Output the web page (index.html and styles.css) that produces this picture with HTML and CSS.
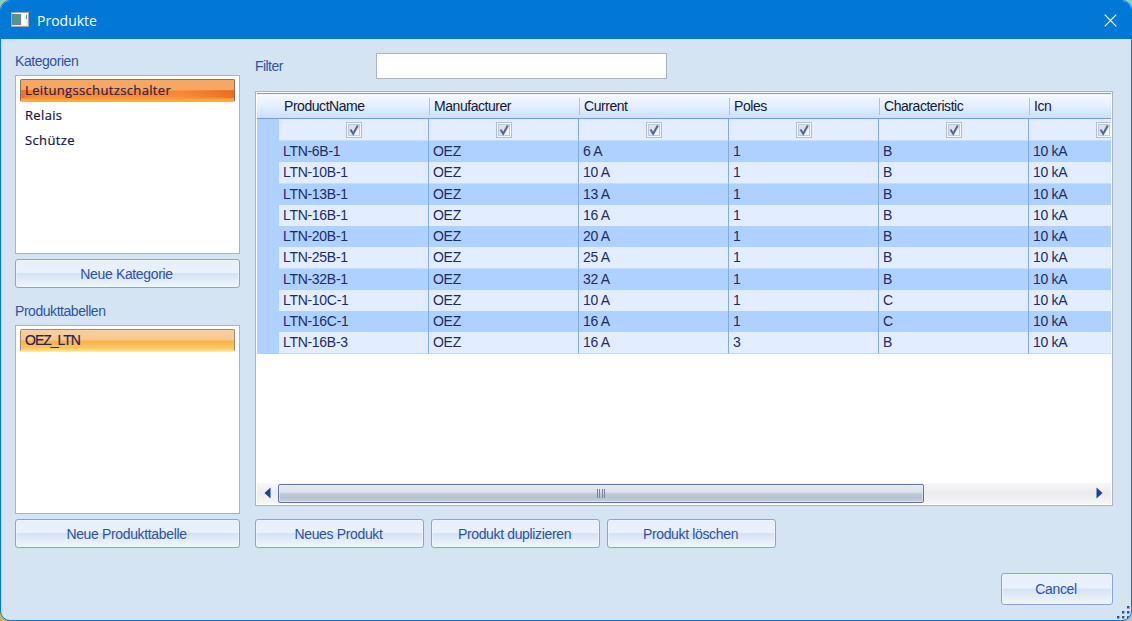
FILE: index.html
```html
<!DOCTYPE html>
<html lang="de">
<head>
    <meta charset="UTF-8">
    <title>Produkte</title>
    <link rel="stylesheet" href="styles.css">
</head>
<body>
    <div class="window">
        <div class="titlebar">
            <svg class="app-icon" width="18" height="15" viewBox="0 0 18 15">
                <rect x="0" y="0" width="18" height="15" fill="#e9eef2"/>
                <rect x="0.5" y="0.5" width="17" height="14" fill="none" stroke="#a9a5a8"/>
                <rect x="1" y="1" width="16" height="1" fill="#fff"/>
                <rect x="1.5" y="2.5" width="8" height="10" fill="#4b9b8a" stroke="#6d84a0"/>
                <rect x="11" y="2" width="4" height="11" fill="#fff"/>
                <rect x="15" y="3" width="1" height="4" fill="#5e87a8"/>
            </svg>
            <span class="title">Produkte</span>
            <svg class="close" width="13" height="13" viewBox="0 0 13 13">
                <path d="M0.7 0.7L12.3 12.3M12.3 0.7L0.7 12.3" stroke="#fff" stroke-width="1.2"/>
            </svg>
        </div>

        <div class="content">
            <div class="sidebar">
                <label class="caption">Kategorien</label>
                <div class="listbox categories">
                    <div class="item active">Leitungsschutzschalter</div>
                    <div class="item">Relais</div>
                    <div class="item">Schütze</div>
                </div>
                <button class="btn"><span>Neue Kategorie</span></button>
                <label class="caption second">Produkttabellen</label>
                <div class="listbox tables">
                    <div class="item selected">OEZ_LTN</div>
                </div>
                <button class="btn"><span>Neue Produkttabelle</span></button>
            </div>

            <div class="main">
                <div class="filter">
                    <label for="filter">Filter</label>
                    <input type="text" id="filter">
                </div>
                <div class="grid">
                    <div class="grid-view">
                        <div class="grid-head" id="head"></div>
                        <div class="grid-body" id="rows"></div>
                    </div>
                    <div class="scrollbar">
                        <svg class="arrow" width="7" height="12" viewBox="0 0 7 12"><path d="M6.5 0.5V11.5L0.5 6Z" fill="#17439b"/></svg>
                        <div class="track">
                            <div class="thumb"><i></i><i></i><i></i><i></i></div>
                        </div>
                        <svg class="arrow" width="7" height="12" viewBox="0 0 7 12"><path d="M0.5 0.5V11.5L6.5 6Z" fill="#17439b"/></svg>
                    </div>
                </div>
                <div class="actions">
                    <button class="btn"><span>Neues Produkt</span></button>
                    <button class="btn"><span>Produkt duplizieren</span></button>
                    <button class="btn"><span>Produkt löschen</span></button>
                </div>
                <button class="btn cancel"><span>Cancel</span></button>
            </div>
        </div>

        <svg class="grip" width="14" height="14" viewBox="0 0 14 14" fill="#35538b">
            <path d="M11 0h2.4v2.4H11zM6 5h2.4v2.4H6zM11 5h2.4v2.4H11zM1 10h2.4v2.4H1zM6 10h2.4v2.4H6zM11 10h2.4v2.4H11z"/>
        </svg>
    </div>

    <script>
        const columns = ['ProductName', 'Manufacturer', 'Current', 'Poles', 'Characteristic', 'Icn'];
        const products = [
            ['LTN-6B-1', 'OEZ', '6 A', '1', 'B', '10 kA'],
            ['LTN-10B-1', 'OEZ', '10 A', '1', 'B', '10 kA'],
            ['LTN-13B-1', 'OEZ', '13 A', '1', 'B', '10 kA'],
            ['LTN-16B-1', 'OEZ', '16 A', '1', 'B', '10 kA'],
            ['LTN-20B-1', 'OEZ', '20 A', '1', 'B', '10 kA'],
            ['LTN-25B-1', 'OEZ', '25 A', '1', 'B', '10 kA'],
            ['LTN-32B-1', 'OEZ', '32 A', '1', 'B', '10 kA'],
            ['LTN-10C-1', 'OEZ', '10 A', '1', 'C', '10 kA'],
            ['LTN-16C-1', 'OEZ', '16 A', '1', 'C', '10 kA'],
            ['LTN-16B-3', 'OEZ', '16 A', '3', 'B', '10 kA']
        ];
        const check = `<svg class="check" width="16" height="16" viewBox="0 0 16 16">
            <rect x="0.5" y="0.5" width="15" height="15" fill="#f4f8fc" stroke="#abc1de"/>
            <rect x="2.5" y="2.5" width="11" height="11" fill="#dde1e8" stroke="#c3c9d3"/>
            <path d="M8 13L13 6V13Z" fill="#f5f6f8"/>
            <path d="M4.5 7.5L7.2 11.8L11.8 3.6" fill="none" stroke="#4b689f" stroke-width="2"/>
        </svg>`;

        function row(cells, cls) {
            return `<div class="row ${cls}"><div class="row-head"></div>` +
                cells.map(c => `<div class="cell">${c}</div>`).join('') + '</div>';
        }

        document.getElementById('head').innerHTML = '<div></div>' +
            columns.map(c => `<div class="col"><span>${c}</span></div>`).join('');
        document.getElementById('rows').innerHTML =
            row(columns.map(() => check), 'filters') +
            products.map((p, i) => row(p, i % 2 ? 'light' : 'dark')).join('');
    </script>
</body>
</html>
```

FILE: styles.css
```css
* {
    box-sizing: border-box;
}
body {
    margin: 0;
    height: 621px;
    overflow: hidden;
    background: linear-gradient(90deg, #8fcdbf 50%, #8fcdbf 50%) top / 100% 50% no-repeat,
        linear-gradient(90deg, #d5b35e 50%, #b9bcc9 50%) bottom / 100% 50% no-repeat;
    font-family: "Liberation Sans", Arial, sans-serif;
    font-size: 14px;
    color: #2f52a3;
}
.window {
    position: relative;
    height: 621px;
    border: 1px solid #0078d7;
    border-radius: 10px;
    background: #d5e4f3;
    overflow: hidden;
}
.titlebar {
    display: flex;
    align-items: center;
    height: 38px;
    padding: 0 14px 0 10px;
    background: #0078d7;
    color: #fff;
    font-family: "Open Sans", "Noto Sans", sans-serif;
}
.app-icon {
    margin: 0 8px 2px 0;
}
.title {
    flex: 1;
    font-size: 14px;
}
.content {
    display: flex;
    gap: 15px;
    padding: 0 18px 0 14px;
}
.sidebar {
    display: flex;
    flex-direction: column;
    width: 225px;
    padding-top: 13px;
}
.caption {
    height: 20px;
    margin-bottom: 3px;
    line-height: 19px;
    letter-spacing: -0.45px;
}
.caption.second {
    margin-top: 14px;
}
.listbox {
    margin-bottom: 5px;
    padding: 3px 4px;
    background: #fff;
    border: 1px solid #abb3bf;
    font-family: "Open Sans", "Noto Sans", sans-serif;
    font-size: 13px;
    color: #15153f;
    -webkit-text-stroke: 0.2px;
}
.categories {
    height: 179px;
}
.tables {
    height: 189px;
}
.item {
    height: 23px;
    margin-bottom: 2px;
    padding-left: 5px;
    line-height: 22px;
    letter-spacing: 0.35px;
}
.item.active,
.item.selected {
    border: 1px solid #8b7158;
    border-radius: 2px;
    padding-left: 4px;
    line-height: 21px;
    color: #2b2250;
}
.item.active {
    background: linear-gradient(90deg, rgba(226, 92, 20, 0.55), transparent 8%, transparent 75%, rgba(220, 80, 15, 0.5)) 0 10px / 100% 8px no-repeat,
        linear-gradient(#f7a766, #fba660 45%, #f58634 55%, #fa9137 84%, #ffb02e);
    border-bottom-color: #ffb02e;
}
.item.selected {
    background: linear-gradient(#f5cfa1, #f9c98a 45%, #f7b351 55%, #fcc45f 84%, #ffe287);
    border-color: #a68b6c;
    border-bottom-color: #ffe9a8;
    font-family: "Liberation Sans", Arial, sans-serif;
    font-size: 14px;
    letter-spacing: -1px;
}
.btn {
    height: 29px;
    padding: 0 2px 0 0;
    border: 1px solid #86a5d4;
    border-radius: 3px;
    background: linear-gradient(#e7effb, #e9f1fc 47%, #d3e2f4 50%, #e3edf9 75%, #eef5fd);
    box-shadow: inset 0 0 0 1px rgba(240, 246, 254, 0.6);
    color: #2f52a3;
    font-family: inherit;
    font-size: 14px;
    letter-spacing: -0.35px;
}
.main {
    display: flex;
    flex-direction: column;
    width: 858px;
    padding-top: 14px;
}
.filter {
    display: flex;
    align-items: center;
    height: 26px;
    letter-spacing: -0.55px;
}
.filter label {
    width: 121px;
}
.filter input {
    width: 291px;
    height: 26px;
    border: 1px solid #abb3bf;
    background: #fff;
}
.grid {
    display: flex;
    flex-direction: column;
    height: 415px;
    margin-top: 12px;
    padding: 1px;
    border: 1px solid #abb3bf;
    background: #fff;
}
.grid-view {
    flex: 1;
    overflow: hidden;
}
.grid-head,
.row {
    display: grid;
    grid-template-columns: 21.5px repeat(6, 150px);
}
.grid-head {
    height: 26px;
    width: 922px;
    border-top: 1px solid #6f9fd9;
    border-bottom: 1px solid #6f9fd9;
    background: linear-gradient(#f5f9ff, #e4efff 50%, #cbdfff);
    color: #17172f;
    letter-spacing: -0.45px;
}
.col {
    padding-left: 5.5px;
    line-height: 25px;
}
.col + .col {
    margin: 4px 0;
    padding-left: 4.5px;
    line-height: 17px;
    border-left: 1px solid #99c7f8;
}
.row {
    width: 922px;
    height: 21.25px;
    line-height: 21px;
    color: #1d2b66;
    letter-spacing: -0.3px;
}
.row-head {
    background: #afd1ff;
}
.cell {
    padding-left: 4.5px;
    border-right: 1px solid #82addf;
    border-bottom: 1px solid #c3dcff;
    background: #e2eeff;
}
.dark .cell {
    background: #afd1ff;
}
.filters {
    height: 22px;
}
.filters .cell {
    padding: 3px 0 0 1px;
    text-align: center;
    line-height: 0;
}
.scrollbar {
    display: flex;
    align-items: center;
    height: 21px;
    padding: 0 8px 1px 7px;
    background: linear-gradient(#f7f7f9, #ececee 50%, #f6f6f8);
}
.track {
    flex: 1;
    padding-left: 7px;
}
.thumb {
    display: flex;
    align-items: center;
    justify-content: center;
    gap: 1.5px;
    width: 646px;
    height: 19px;
    border: 1px solid #65749c;
    border-radius: 2px;
    background: linear-gradient(#e8ecf2, #dbe1ea 40%, #bcc7d7 55%, #b5c1d4 80%, #cad3e2);
    box-shadow: inset 0 0 0 1px rgba(230, 236, 245, 0.6);
}
.thumb i {
    width: 1px;
    height: 9px;
    background: #79839a;
}
.actions {
    display: flex;
    gap: 7px;
    margin-top: 13px;
}
.actions .btn {
    width: 169px;
}
.cancel {
    align-self: flex-end;
    width: 112px;
    height: 32px;
    margin-top: 25px;
}
.grip {
    position: absolute;
    right: 1px;
    bottom: 0;
}
```
